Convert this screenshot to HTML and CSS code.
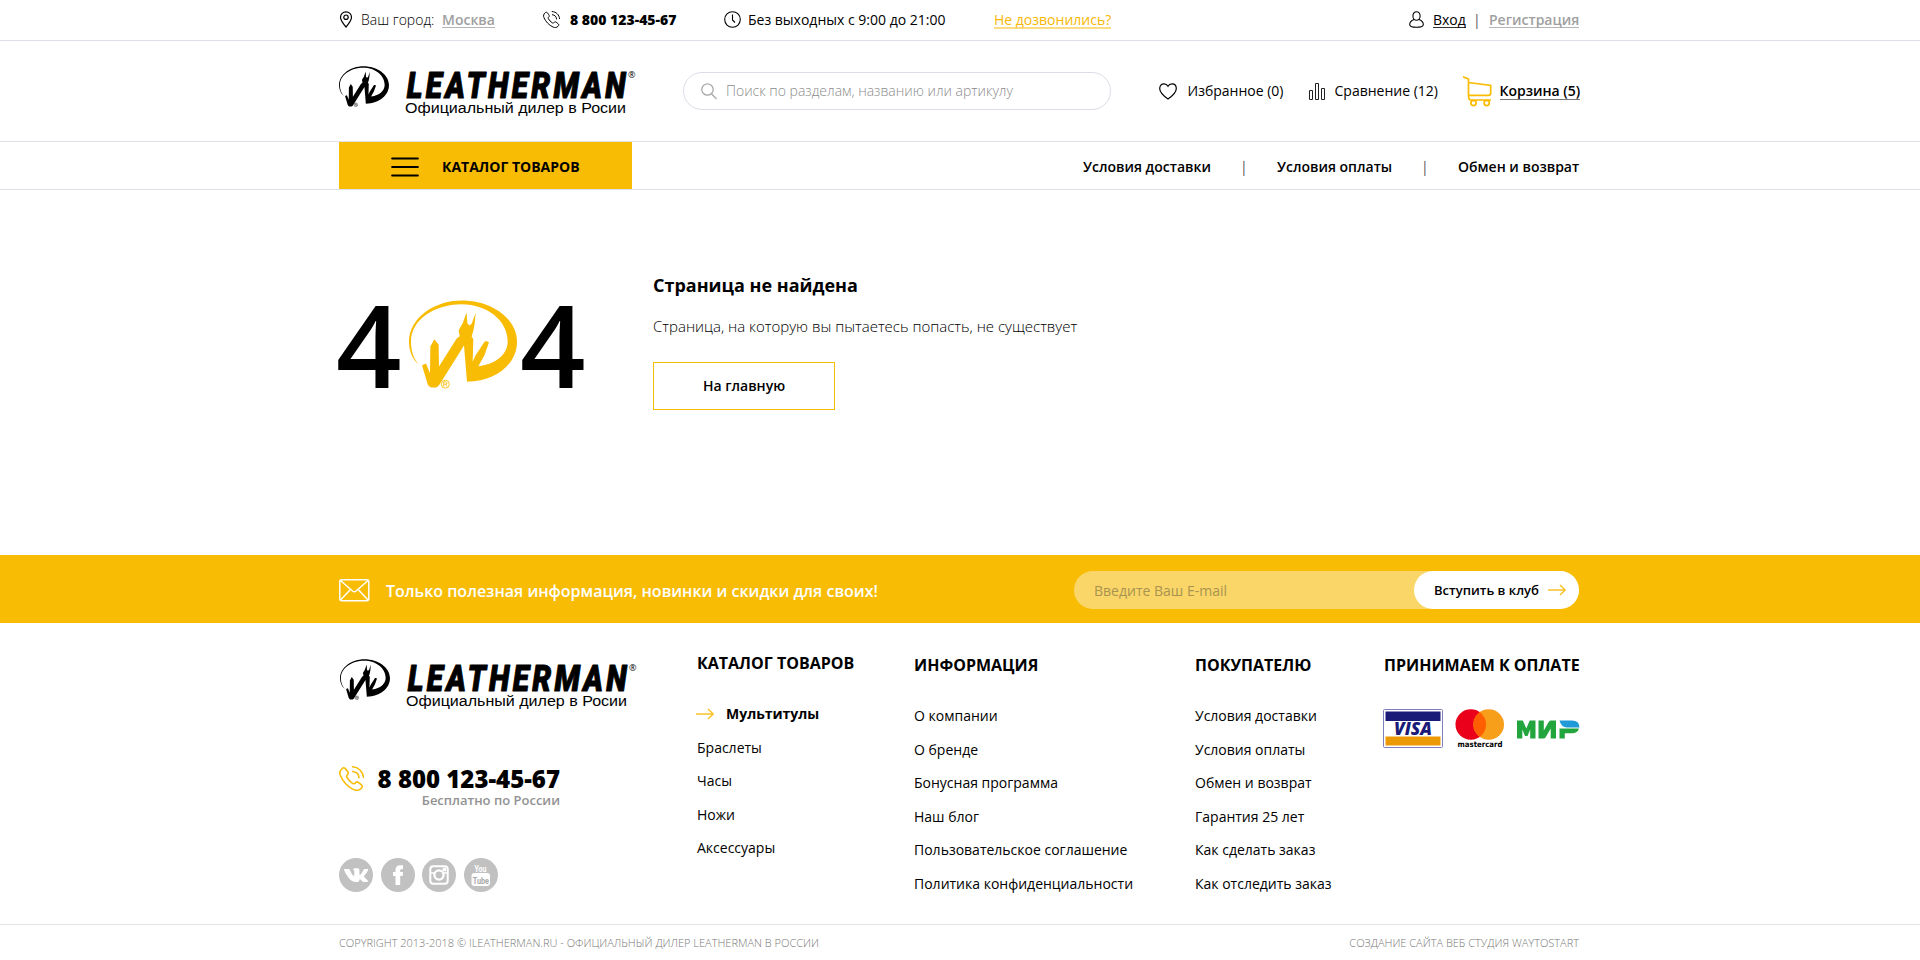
FILE: index.html
```html
<!DOCTYPE html>
<html lang="ru">
<head>
<meta charset="utf-8">
<title>Leatherman</title>
<link rel="stylesheet" href="styles.css">
</head>
<body>
<svg class="defs" width="0" height="0">
  <symbol id="emblem" viewBox="237 119 324 266">
    <path d="M268 314C246 296 237 270 237 243C237 175 310 120 395 120C486 120 561 175 561 243C561 310 500 362 411 364L402 255L330 370Q325 380 318 381L303 381Q296 379 293 371L276 314L288 309L300 338L301 258L313 236L326 253L327 318L380 234L389 227L386 209L398 188L410 155L412 188L418 195L425 190L437 157L434 190L430 211L425 228L430 236L428 304L436 286L464 243Q469 240 477 245L463 285L445 317C500 311 533 280 533 243C533 180 472 131 395 131C310 131 243 180 243 243C243 272 250 294 268 314Z"/>
    <circle cx="346" cy="371" r="12" fill="none" stroke="currentColor" stroke-width="2.5"/>
    <path d="M341 378V364H347Q351 364 351 368T347 371H342M347 371L351 378" fill="none" stroke="currentColor" stroke-width="2.5"/>
  </symbol>
  <symbol id="phone" viewBox="0 0 24 24">
    <g fill="none" stroke="currentColor" stroke-linecap="round" stroke-linejoin="round">
      <path d="M5.6 2C4.700 1.300 3.800 1.700 2.900 2.600C.8 4.500 .3 6.700 1.300 9.200C3.300 14.300 8.500 20.300 14.300 22.700C17 23.800 19.300 23.500 21.200 21.600C22.500 20.300 22.700 19.200 21.600 18.200L18.500 15.700C17.500 15 16.700 15.200 15.900 16C14.900 17.200 14.200 17.400 12.900 16.600C10.800 15.200 9 13.300 7.800 11.200C7 9.900 7.200 9.100 8.200 8.300C9.100 7.600 9.100 6.500 8.400 5.600Z"/>
      <path d="M13 .8C18.500 1 23 5.300 23.400 10.800M13.200 5.200C16.700 5.500 19 8 19.200 11.300"/>
    </g>
  </symbol>
  <symbol id="arrow" viewBox="0 0 18 12">
    <path d="M0 6H17M12 1L17.200 6L12 11" fill="none" stroke="#f9c22a" stroke-width="1.500"/>
  </symbol>
</svg>

<header>
  <div class="topbar">
    <div class="wrap topbar-row">
      <svg class="ico" width="14" height="17" viewBox="0 0 14 17"><path d="M7 16C4 12.500 1.500 9 1.500 6.300A5.500 5.500 0 0 1 12.500 6.300C12.500 9 10 12.500 7 16Z" fill="none" stroke="#000" stroke-width="1.200"/><circle cx="7" cy="6.200" r="2.200" fill="none" stroke="#000" stroke-width="1.200"/></svg>
      <span class="t light">Ваш город:</span>
      <a class="t link-grey semi">Москва</a>
      <svg class="phone-ico" width="17" height="17"><use href="#phone" width="17" height="17"/></svg>
      <span class="t extra">8 800 123-45-67</span>
      <svg class="ico" width="17" height="17" viewBox="0 0 17 17" fill="none" stroke="#000" stroke-width="1.100"><circle cx="8.500" cy="8.500" r="7.800"/><path d="M8.500 3.500V9L11 11.500"/></svg>
      <span class="t">Без выходных с 9:00 до 21:00</span>
      <a class="t link-yellow">Не дозвонились?</a>
      <svg class="ico" width="15" height="17" viewBox="0 0 15 17" fill="none" stroke="#000" stroke-width="1.100"><ellipse cx="7.500" cy="5" rx="3.600" ry="4.300"/><path d="M5 8.500C2.500 9.500 .7 11 .7 13.500C.7 15.500 3 16.300 7.500 16.300S14.300 15.500 14.300 13.500C14.300 11 12.500 9.500 10 8.500"/></svg>
      <a class="t link-black">Вход</a>
      <span class="t bar">|</span>
      <a class="t link-grey semi">Регистрация</a>
    </div>
  </div>
  <div class="head">
    <div class="wrap head-row">
      <svg class="logo" width="300" height="54">
        <use href="#emblem" width="50" height="41"/>
        <text class="wordmark" transform="translate(67.800 32.300) scale(.82 1)" textLength="267">LEATHERMAN</text>
        <text class="reg" x="289" y="12">®</text>
        <text class="dealer" x="66" y="47" textLength="221" lengthAdjust="spacingAndGlyphs">Официальный дилер в Росии</text>
      </svg>
      <div class="search">
        <svg width="16" height="17" viewBox="0 0 16 17" fill="none" stroke="#aaa" stroke-width="1.300"><circle cx="6.500" cy="6.500" r="5.700"/><path d="M10.500 10.800L15.500 16"/></svg>
        <span class="t light">Поиск по разделам, названию или артикулу</span>
      </div>
      <svg class="ico" width="18" height="17" viewBox="0 0 18 17"><path d="M9 16C4 12.500 .7 9.500 .7 5.500C.7 2.700 2.500 .8 5 .8C6.800 .8 8.200 1.700 9 3.200C9.800 1.700 11.200 .8 13 .8C15.500 .8 17.300 2.700 17.300 5.500C17.300 9.500 14 12.500 9 16Z" fill="none" stroke="#000" stroke-width="1.200"/></svg>
      <span class="t">Избранное (0)</span>
      <svg class="ico" width="17" height="17" viewBox="0 0 17 17" fill="none" stroke="#222"><path d="M.5 7.500H3.500V16.500H.5ZM6.500 .5H9.500V16.500H6.500ZM12.500 5.500H15.500V16.500H12.500Z"/></svg>
      <span class="t">Сравнение (12)</span>
      <svg class="cart-ico" width="29" height="31" viewBox="0 0 29 31" fill="none" stroke="#fabb00" stroke-width="1.700"><path d="M0 .9L5.500 3V20Q5.500 24 8 24H28M5.500 6.500L27.700 9.500V17Q27.700 19.300 25.500 19.300H5.500"/><circle cx="10.500" cy="27" r="2.600"/><circle cx="23.700" cy="27" r="2.600"/></svg>
      <a class="t semi cart-link">Корзина (5)</a>
    </div>
  </div>
  <nav class="nav">
    <div class="wrap nav-row">
      <div class="catalog">
        <svg width="28" height="20" viewBox="0 0 28 20"><path d="M1.200 1.500H26.800M1.200 10H26.800M1.200 18.500H26.800" stroke="#000" stroke-width="2.200" stroke-linecap="round"/></svg>
        <span class="t bold">КАТАЛОГ ТОВАРОВ</span>
      </div>
      <a class="t semi">Условия доставки</a><span class="t bar">|</span>
      <a class="t semi">Условия оплаты</a><span class="t bar">|</span>
      <a class="t semi">Обмен и возврат</a>
    </div>
  </nav>
</header>

<main class="wrap error">
  <div class="code">
    <span class="four">4</span>
    <svg class="zero" width="108" height="89"><use href="#emblem" width="108" height="89"/></svg>
    <span class="four">4</span>
  </div>
  <div class="message">
    <h1>Страница не найдена</h1>
    <p class="light">Страница, на которую вы пытаетесь попасть, не существует</p>
    <a class="home semi">На главную</a>
  </div>
</main>

<section class="club">
  <div class="wrap club-row">
    <svg width="31" height="23" viewBox="0 0 31 23" fill="none" stroke="#fff" stroke-width="1.500"><rect x=".8" y=".8" width="29" height="21" rx="2"/><path d="M1.500 1.500L13.500 12Q15.300 13.400 17.100 12L29 1.500M1.500 21L11 11M29 21L19.600 11"/></svg>
    <span class="t semi club-title">Только полезная информация, новинки и скидки для своих!</span>
    <div class="subscribe">
      <span class="t email">Введите Ваш E-mail</span>
      <a class="join"><span class="t semi">Вступить в клуб</span><svg width="18" height="12"><use href="#arrow" width="18" height="12"/></svg></a>
    </div>
  </div>
</section>

<footer>
  <div class="wrap footer-row">
    <div class="contacts">
      <svg class="logo" width="300" height="54">
        <use href="#emblem" width="50" height="41"/>
        <text class="wordmark" transform="translate(67.800 32.300) scale(.82 1)" textLength="267">LEATHERMAN</text>
        <text class="reg" x="289" y="12">®</text>
        <text class="dealer" x="66" y="47" textLength="221" lengthAdjust="spacingAndGlyphs">Официальный дилер в Росии</text>
      </svg>
      <div class="tel">
        <svg class="tel-ico" width="25" height="25"><use href="#phone" width="25" height="25"/></svg>
        <div class="tel-text">
          <span class="t tel-num">8 800 123-45-67</span>
          <span class="t tel-note">Бесплатно по России</span>
        </div>
      </div>
      <div class="social">
        <svg width="34" height="34" viewBox="0 0 34 34"><circle cx="17" cy="17" r="17" fill="#c1c1c1"/><path d="M5.500 11H9.500Q10.500 11 11 12.200Q12.500 16 14.300 17.700Q15.300 18 15.300 16.500V13Q15.200 11.800 13.800 11.300Q14.500 10.300 16.500 10.300H19Q20.400 10.500 20.400 12V16Q20.600 17.300 21.500 16.600Q23 15 24.300 12.200Q24.700 11 25.700 11H28.800Q29.600 11.200 29 12.500Q27.700 15 25.200 17.700Q24.700 18.500 25.400 19.200L28.800 22.500Q29.300 24 27.800 24H24.800Q23.700 24 22.500 22.500Q20.500 20.300 20.300 22.300Q20.300 24 18.800 24H16.500Q11.500 23.500 8 17.500Q6 14.300 5 12Q4.800 11.200 5.500 11Z" fill="#fff"/></svg>
        <svg width="34" height="34" viewBox="0 0 34 34"><circle cx="17" cy="17" r="17" fill="#c1c1c1"/><path d="M14.500 27V18H12V14H14.500V12Q14.500 7.300 19 7.300H22V11.200H20Q19.200 11.200 19.200 12.300V14H22L21.600 18H19.200V27Z" fill="#fff"/></svg>
        <svg width="34" height="34" viewBox="0 0 34 34"><circle cx="17" cy="17" r="17" fill="#c1c1c1"/><g fill="none" stroke="#fff"><rect x="8.300" y="8.300" width="17.400" height="17.400" rx="3" stroke-width="2"/><circle cx="17" cy="17" r="4.600" stroke-width="2.300"/><path d="M8 15H12.500M21.500 15H26" stroke-width="1.500"/></g><rect x="20.700" y="9.700" width="3.500" height="3.500" rx=".6" fill="#fff"/></svg>
        <svg width="34" height="34" viewBox="0 0 34 34"><circle cx="17" cy="17" r="17" fill="#c1c1c1"/><rect x="7.500" y="15" width="18.500" height="13" rx="3" fill="#fff"/><text class="yt" x="10.500" y="13.700" textLength="12" lengthAdjust="spacingAndGlyphs">You</text><text class="yt yt-tube" x="8.700" y="25.800" textLength="16.300" lengthAdjust="spacingAndGlyphs">Tube</text></svg>
      </div>
    </div>
    <div class="col col-1">
      <h2>КАТАЛОГ ТОВАРОВ</h2>
      <ul>
        <li class="current bold"><svg width="18" height="12"><use href="#arrow" width="18" height="12"/></svg>Мультитулы</li>
        <li>Браслеты</li>
        <li>Часы</li>
        <li>Ножи</li>
        <li>Аксессуары</li>
      </ul>
    </div>
    <div class="col col-2">
      <h2>ИНФОРМАЦИЯ</h2>
      <ul>
        <li>О компании</li>
        <li>О бренде</li>
        <li>Бонусная программа</li>
        <li>Наш блог</li>
        <li>Пользовательское соглашение</li>
        <li>Политика конфиденциальности</li>
      </ul>
    </div>
    <div class="col col-3">
      <h2>ПОКУПАТЕЛЮ</h2>
      <ul>
        <li>Условия доставки</li>
        <li>Условия оплаты</li>
        <li>Обмен и возврат</li>
        <li>Гарантия 25 лет</li>
        <li>Как сделать заказ</li>
        <li>Как отследить заказ</li>
      </ul>
    </div>
    <div class="col col-4">
      <h2>ПРИНИМАЕМ К ОПЛАТЕ</h2>
      <div class="pay">
        <svg width="60" height="39" viewBox="0 0 60 39"><rect x=".5" y=".5" width="59" height="38" rx="1" fill="#fff" stroke="#7f7fbe"/><path d="M2.500 2.500H57.500V12H2.500Z" fill="#1a1a78"/><path d="M2.500 27.500H57.500V36.500H2.500Z" fill="#eb9a05"/><text class="visa" x="11" y="25.700" textLength="38" lengthAdjust="spacingAndGlyphs">VISA</text></svg>
        <svg class="mc-logo" width="50" height="40" viewBox="0 0 50 40"><circle cx="15.800" cy="15.500" r="15.300" fill="#eb001b"/><circle cx="33.700" cy="15.500" r="15.300" fill="#f79e1b"/><path d="M24.750 3.100A15.300 15.300 0 0 1 24.750 27.900A15.300 15.300 0 0 1 24.750 3.100Z" fill="#ff5f00"/><text class="mc" x="2.500" y="37.500" textLength="45" lengthAdjust="spacingAndGlyphs">mastercard</text></svg>
        <svg class="mir" width="63" height="19" viewBox="0 0 63 19"><path d="M0 18.500V.5H5.800L9.300 8.500L12.700 .5H18.500V18.500H13.200V9.500L10.500 16H8L5.300 9.500V18.500ZM21.500 18.500V.5H26.800V10.500L32 1.500Q32.700 .5 34 .5H39V18.500H33.700V8.500L28.500 17.500Q27.800 18.500 26.500 18.500ZM42.500 8.500H62Q60.500 13.300 55 13.300H47.800V18.500H42.500Z" fill="#22a53c"/><path d="M42.500 .5H55Q62.500 .5 62.500 7.500H50Q44 7 42.500 .5Z" fill="#219bd8"/></svg>
      </div>
    </div>
  </div>
  <div class="bottom">
    <div class="wrap bottom-row">
      <span class="t light">COPYRIGHT 2013-2018 © ILEATHERMAN.RU - ОФИЦИАЛЬНЫЙ ДИЛЕР LEATHERMAN В РОССИИ</span>
      <span class="t light">СОЗДАНИЕ САЙТА ВЕБ СТУДИЯ WAYTOSTART</span>
    </div>
  </div>
</footer>
</body>
</html>
```

FILE: styles.css
```css
* { box-sizing: border-box; }
body { margin: 0; background: #fff; color: #000; font: 14px/20px "Open Sans", sans-serif; }
h1, h2, p, ul { margin: 0; padding: 0; }
ul { list-style: none; }
.defs { position: absolute; }
.wrap { width: 1240px; margin: 0 auto 0 339px; }
.t { white-space: nowrap; justify-self: start; }
.light { font-weight: 300; }
.semi { font-weight: 600; }
.bold { font-weight: 700; }
.extra { font-weight: 800; }

/* Logo */
.logo { display: block; overflow: visible; }
.wordmark { font: italic 900 36.500px Roboto, sans-serif; stroke: #000; stroke-width: 1; stroke-linejoin: round; }
.reg { font: 9px "Open Sans", sans-serif; }
.dealer { font: 15.500px "Liberation Sans", sans-serif; }

/* Top bar */
.topbar { height: 41px; border-bottom: 1px solid #dfdfe8; }
.topbar-row { display: grid; height: 39px; align-items: center; grid-template-columns: 22px 81px 101px 27px 154px 24px 246px 415px 24px 41px 15px auto; }
.topbar-row .t { padding-top: 1px; }
.topbar-row .bar { margin-left: -1px; }
.link-grey { color: #a0a0a0; border-bottom: 1px solid #b5b5b5; line-height: 15px; }
.link-yellow { color: #f8b704; border-bottom: 2px solid #fbdc84; line-height: 15px; }
.link-black { border-bottom: 1px solid #333; line-height: 15px; }
.phone-ico { stroke-width: 1.400; }

/* Header */
.head { height: 101px; border-bottom: 1px solid #dfdfe8; }
.head-row { display: grid; height: 100px; align-items: center; grid-template-columns: 344px 476px 28.500px 121px 26px 128.500px 36.500px auto; }
.head .logo { margin-top: 4px; }
.search { display: flex; align-items: center; width: 428px; height: 38px; border: 1px solid #dcdce6; border-radius: 19px; padding-left: 17px; gap: 9px; color: #8c8c8c; }
.cart-link { border-bottom: 1px solid #777; line-height: 16px; padding-top: 1px; }

/* Navigation */
.nav { height: 48px; border-bottom: 1px solid #dfdfe8; }
.nav-row { display: grid; height: 47px; align-items: center; grid-template-columns: 744px 157px 37px 144px 37px auto; }
.nav .t { padding-top: 2px; }
.catalog { display: flex; align-items: center; width: 293px; height: 47px; background: #f8bc04; padding: 2px 0 0 52px; gap: 23px; }
.nav .catalog .t { padding-top: 0; }
.bar { color: #555; }

/* 404 */
.error { display: flex; height: 365px; }
.code { display: flex; width: 314px; padding-top: 109px; }
.four { width: 66px; margin: -5px 0 0 -3px; font-size: 114.600px; line-height: 100px; font-weight: 600; }
.zero { margin: 1px 6px 0 7px; color: #f8bc04; fill: #f8bc04; }
.message { padding-top: 82px; }
.message h1 { font-size: 18px; font-weight: 700; line-height: 26px; }
.message p { margin-top: 18px; font-size: 15px; line-height: 20px; }
.home { display: flex; width: 182px; height: 48px; margin-top: 26px; align-items: center; justify-content: center; border: 1px solid #f8bc04; }

/* Subscription */
.club { height: 68px; background: #f8bc04; }
.club-row { display: flex; align-items: center; height: 68px; padding-top: 2px; }
.club-title { margin-left: 16px; color: #fff; font-size: 16px; padding-top: 2px; }
.subscribe { display: flex; align-items: center; justify-content: space-between; width: 505px; height: 38px; margin-left: auto; border-radius: 19px; background: #fad668; padding-left: 20px; }
.email { color: #a89350; padding-top: 1px; }
.join { display: flex; align-items: center; width: 165px; height: 38px; padding-left: 20px; gap: 9px; border-radius: 19px; background: #fff; font-size: 13px; }

/* Footer */
.footer-row { display: flex; height: 301px; }
.contacts { flex: none; width: 358px; padding: 36px 0 0 1px; }
.tel { display: flex; margin: 52px 0 0 -1px; }
.tel-ico { color: #f8bc04; stroke-width: 1.500; margin-top: 1px; }
.tel-text { display: flex; flex-direction: column; width: 196px; align-items: flex-end; }
.tel-num { font-size: 24px; font-weight: 800; line-height: 28px; }
.tel-note { font-size: 13px; font-weight: 600; line-height: 14px; color: #929292; }
.social { display: flex; gap: 7.700px; margin: 51px 0 0 -1px; }
.yt { font: 700 9.500px Roboto, sans-serif; fill: #fff; }
.yt-tube { fill: #a9a9a9; }
.col { flex: none; padding-top: 32px; white-space: nowrap; }
.col h2 { font-size: 16px; font-weight: 700; line-height: 20px; }
.col ul { margin-top: 31px; }
.col li { height: 33.500px; line-height: 20px; }
.col .current { display: flex; align-items: center; gap: 12px; height: 20px; margin: 0 0 13.500px -1px; }
.col-1 { width: 217px; padding-top: 30px; }
.col-2 { width: 281px; }
.col-3 { width: 188px; }
.col-4 h2 { margin-left: 1px; }
.pay { display: flex; margin-top: 34px; gap: 12px; }
.mc-logo { overflow: visible; }
.mir { margin-top: 11px; }
.visa { font: italic 800 17px "Open Sans", sans-serif; fill: #1a1a78; }
.mc { font: 700 7.800px "DejaVu Sans", sans-serif; }
.bottom { border-top: 1px solid #e2e2e2; height: 35px; }
.bottom-row { display: flex; justify-content: space-between; align-items: center; height: 35px; font-size: 11px; color: #777; }
```
